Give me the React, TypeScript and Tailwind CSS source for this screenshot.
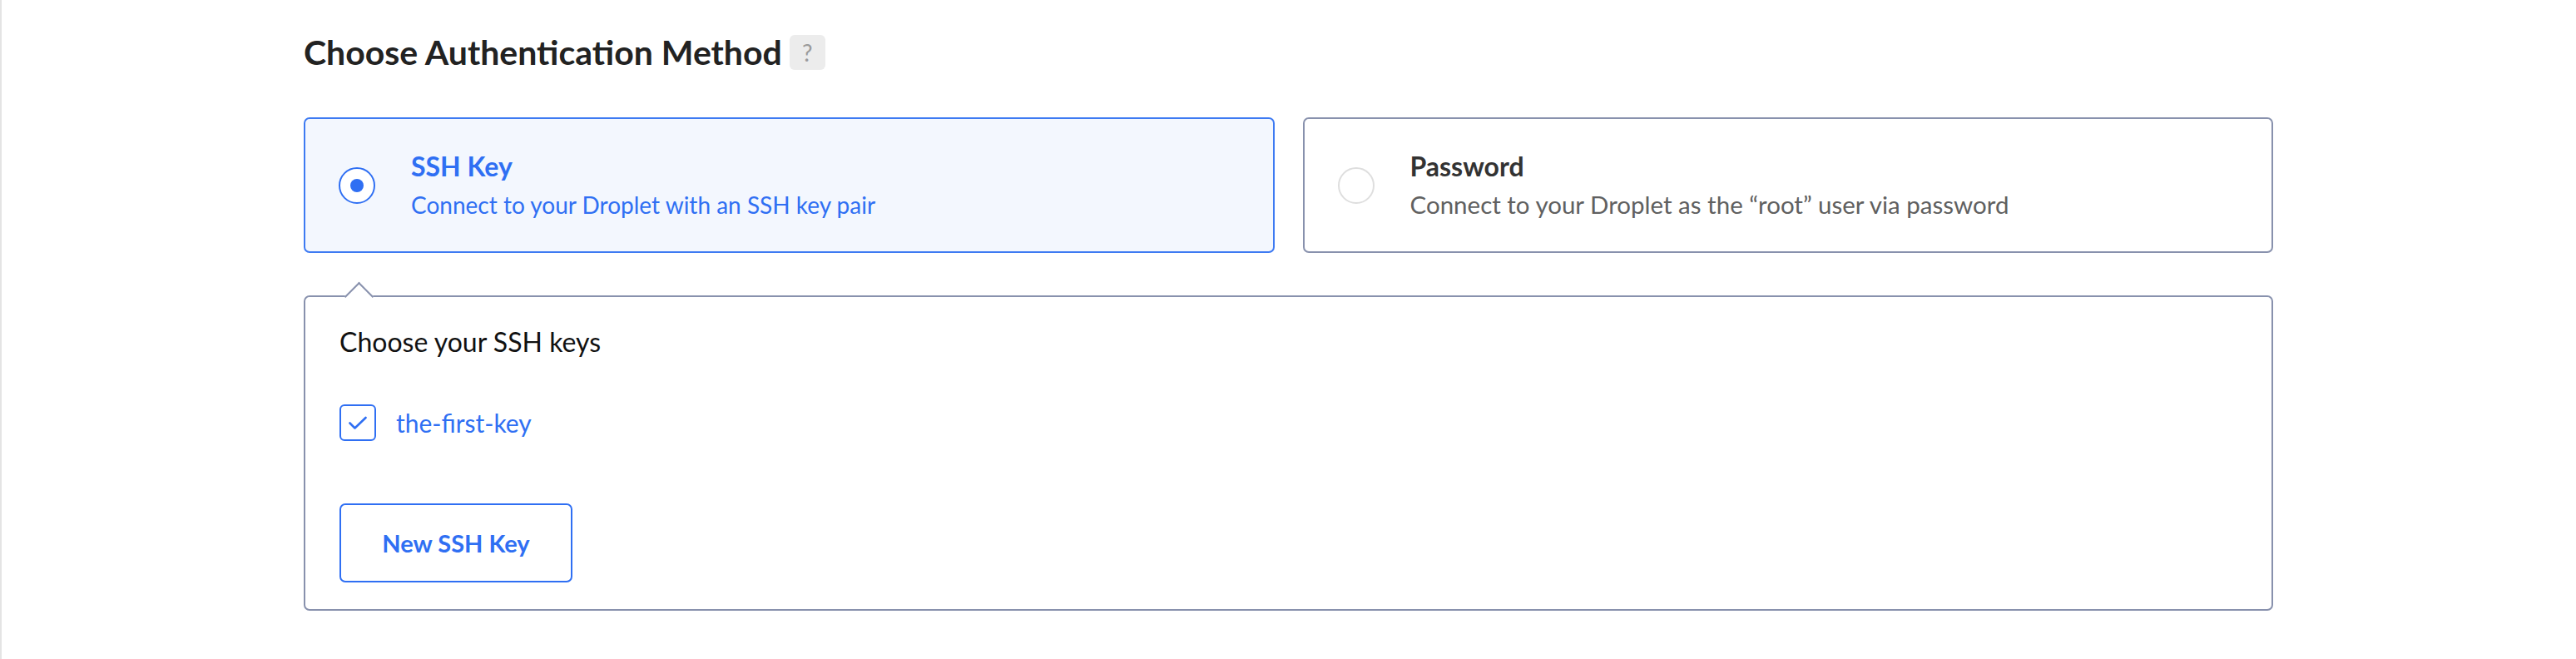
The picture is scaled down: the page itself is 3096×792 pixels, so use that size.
import React from 'react'

const blue = 'text-[#2f6ff3]'

function Radio({ checked }: { checked: boolean }) {
  if (checked) {
    return (
      <span className="w-[44px] h-[44px] shrink-0 rounded-full border-2 border-[#2f6ff3] bg-white flex items-center justify-center">
        <span className="w-[16px] h-[16px] rounded-full bg-[#2f6ff3]" />
      </span>
    )
  }
  return <span className="w-[44px] h-[44px] shrink-0 rounded-full border-2 border-[#dedede] bg-white" />
}

function MethodCard({
  title,
  desc,
  selected,
}: {
  title: string
  desc: string
  selected: boolean
}) {
  return (
    <div
      className={
        selected
          ? 'h-[163px] rounded-[7px] border-2 border-[#3d7af2] bg-[#f3f7fe] flex items-center pl-[40px]'
          : 'h-[163px] rounded-[7px] border-2 border-[#8891ad] bg-white flex items-center pl-[40px]'
      }
    >
      <Radio checked={selected} />
      <div className="ml-[43px] flex flex-col gap-[10px]">
        <p
          className={
            selected
              ? `text-[32px] leading-[36px] font-bold ${blue}`
              : 'text-[32px] leading-[36px] font-bold text-[#333333]'
          }
        >
          {title}
        </p>
        <p
          className={
            selected
              ? `text-[28px] leading-[36px] ${blue}`
              : 'text-[29.5px] leading-[36px] text-[#606060]'
          }
        >
          {desc}
        </p>
      </div>
    </div>
  )
}

export default function App() {
  return (
    <div
      className="min-h-[792px] w-[3096px] bg-white border-l-2 border-[#e4e4e4]"
      style={{ fontFamily: 'Lato, "Open Sans", sans-serif' }}
    >
      <div className="ml-[363px] w-[2367px] pt-[39px]">
        {/* Section heading */}
        <div className="flex items-center h-[48px]">
          <h2 className="text-[41px] leading-[48px] font-bold text-[#222222]">
            Choose Authentication Method
          </h2>
          <span className="ml-[9px] w-[43px] h-[42px] rounded-[6px] bg-[#ececec] flex items-center justify-center text-[28px] text-[#9b9b9b]">
            ?
          </span>
        </div>

        {/* Method cards */}
        <div className="mt-[54px] grid grid-cols-2 gap-[34px]">
          <MethodCard
            selected
            title="SSH Key"
            desc="Connect to your Droplet with an SSH key pair"
          />
          <MethodCard
            selected={false}
            title="Password"
            desc="Connect to your Droplet as the “root” user via password"
          />
        </div>

        {/* SSH keys panel */}
        <div className="relative mt-[51px] rounded-[7px] border-2 border-[#8891ad] bg-white px-[41px] pt-[34px] pb-[32px]">
          <span className="absolute -top-[13px] left-[52px] w-[25px] h-[25px] rotate-45 bg-white border-l-2 border-t-2 border-[#8891ad]" />
          <p className="text-[32px] leading-[40px] text-[#111111]">Choose your SSH keys</p>

          <label className="mt-[55px] flex items-center gap-[24px]">
            <span className="w-[44px] h-[44px] rounded-[6px] border-2 border-[#2f6ff3] bg-white flex items-center justify-center">
              <svg width="28" height="28" viewBox="0 0 28 28" fill="none" stroke="#2f6ff3" strokeWidth={2.6} strokeLinecap="round" strokeLinejoin="round">
                <path d="M4.5 14.5l6 6L23.5 8" />
              </svg>
            </span>
            <span className={`text-[30px] leading-[40px] ${blue}`}>the-first-key</span>
          </label>

          <button className="mt-[75px] w-[280px] h-[95px] rounded-[7px] border-2 border-[#2f6ff3] bg-white text-[29px] font-bold text-[#2f6ff3]">
            New SSH Key
          </button>
        </div>
      </div>
    </div>
  )
}
